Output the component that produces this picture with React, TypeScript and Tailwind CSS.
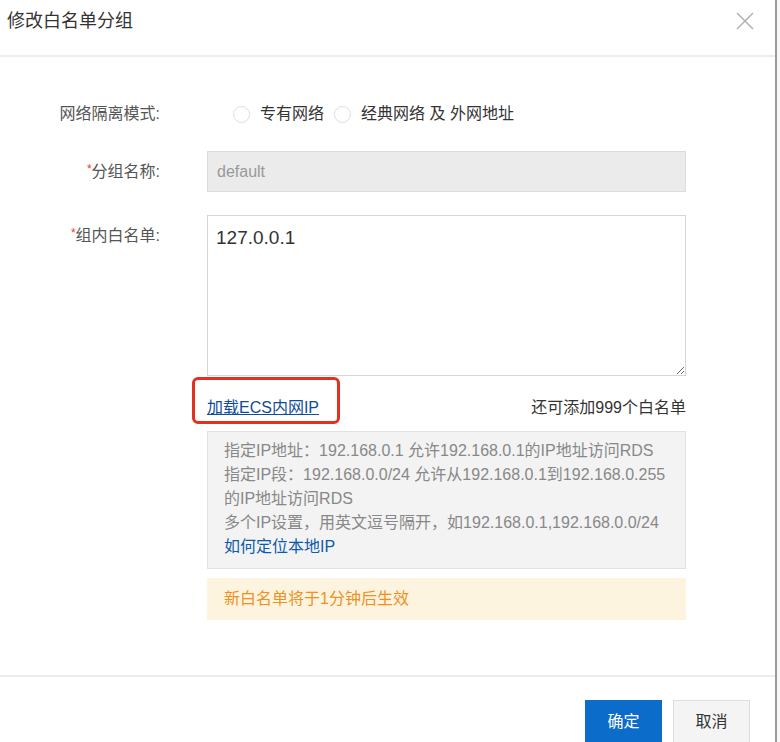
import React from 'react';

const font = { fontFamily: '"Liberation Sans", "Noto Sans CJK SC", sans-serif' };

const Label: React.FC<{ text: string; required?: boolean; className?: string }> = ({ text, required, className }) => (
  <div className={`w-[160px] shrink-0 text-right text-[16px] text-[#555] ${className ?? ''}`}>
    {required && <span className="text-[#e8402f] text-[12px] align-top">*</span>}
    {text}
  </div>
);

const Radio: React.FC<{ label: string }> = ({ label }) => (
  <label className="flex items-center">
    <span className="w-[17px] h-[17px] rounded-full border border-[#dedede] bg-white mr-[10px]"></span>
    <span className="text-[16px] text-[#333] mr-[10px]">{label}</span>
  </label>
);

export default function App() {
  return (
    <div className="w-[780px] h-[742px] bg-white overflow-hidden flex" style={font}>
      <div className="w-[777px] h-full border-r-2 border-[#9a9a9a] flex flex-col shrink-0">
        {/* header */}
        <div className="h-[57px] shrink-0 border-b-2 border-[#ececec] flex items-start justify-between pl-[7px] pr-[21px] pt-[10px]">
          <h3 className="text-[18px] leading-[22px] text-[#333]">修改白名单分组</h3>
          <button className="w-[18px] h-[18px] mt-[2px] text-[#b3b3b3]">
            <svg viewBox="0 0 18 18" width="18" height="18" fill="none" stroke="currentColor" strokeWidth="1.6">
              <path d="M1 1 L17 17 M17 1 L1 17" />
            </svg>
          </button>
        </div>

        {/* body */}
        <div className="flex-1 pt-[41px]">
          <div className="flex items-center h-[32px]">
            <Label text="网络隔离模式:" />
            <div className="ml-[73px] flex items-center">
              <Radio label="专有网络" />
              <Radio label="经典网络 及 外网地址" />
            </div>
          </div>

          <div className="flex items-center mt-[21px]">
            <Label text="分组名称:" required />
            <div className="ml-[47px] w-[479px] h-[41px] bg-[#ebebeb] border border-[#dcdcdc] flex items-center px-[9px] text-[16px] text-[#999]">
              default
            </div>
          </div>

          <div className="flex items-start mt-[23px]">
            <Label text="组内白名单:" required className="pt-[9px]" />
            <div className="ml-[47px] w-[479px]">
              <textarea
                defaultValue="127.0.0.1"
                className="block w-[479px] h-[161px] border border-[#d6d6d6] px-[8px] pt-[10px] text-[19px] leading-[24px] text-[#333] outline-none resize-y bg-white"
                style={font}
              />
              <div className="relative h-[55px] pt-[20px] flex items-start justify-between">
                <a className="text-[16px] leading-[24px] text-[#0f4c9b] underline">加载ECS内网IP</a>
                <span className="text-[16px] leading-[24px] text-[#333]">还可添加999个白名单</span>
                <div className="absolute left-[-15px] top-[1px] w-[148px] h-[47px] border-[3px] border-[#e0321f] rounded-[6px]"></div>
              </div>
              <div className="bg-[#f3f3f3] border border-[#e2e2e2] pl-[16px] pt-[7px] pb-[9px] text-[16px] leading-[24px] text-[#888] whitespace-nowrap">
                <div>指定IP地址：192.168.0.1 允许192.168.0.1的IP地址访问RDS</div>
                <div>指定IP段：192.168.0.0/24 允许从192.168.0.1到192.168.0.255</div>
                <div>的IP地址访问RDS</div>
                <div>多个IP设置，用英文逗号隔开，如192.168.0.1,192.168.0.0/24</div>
                <a className="text-[#0c5aab]">如何定位本地IP</a>
              </div>
              <div className="mt-[9px] h-[42px] bg-[#fdf4e0] flex items-center pl-[17px] text-[16px] text-[#f0901d]">
                新白名单将于1分钟后生效
              </div>
            </div>
          </div>
        </div>

        {/* footer */}
        <div className="h-[67px] shrink-0 border-t-2 border-[#ececec] flex justify-end items-start pt-[23px] pr-[25px] gap-[11px]">
          <button className="w-[77px] h-[44px] bg-[#0b6cc9] text-white text-[16px]">确定</button>
          <button className="w-[77px] h-[44px] bg-[#f4f4f4] border border-[#dddddd] text-[#333] text-[16px]">取消</button>
        </div>
      </div>
      <div className="flex-1 bg-[#f7f7f7]"></div>
    </div>
  );
}
